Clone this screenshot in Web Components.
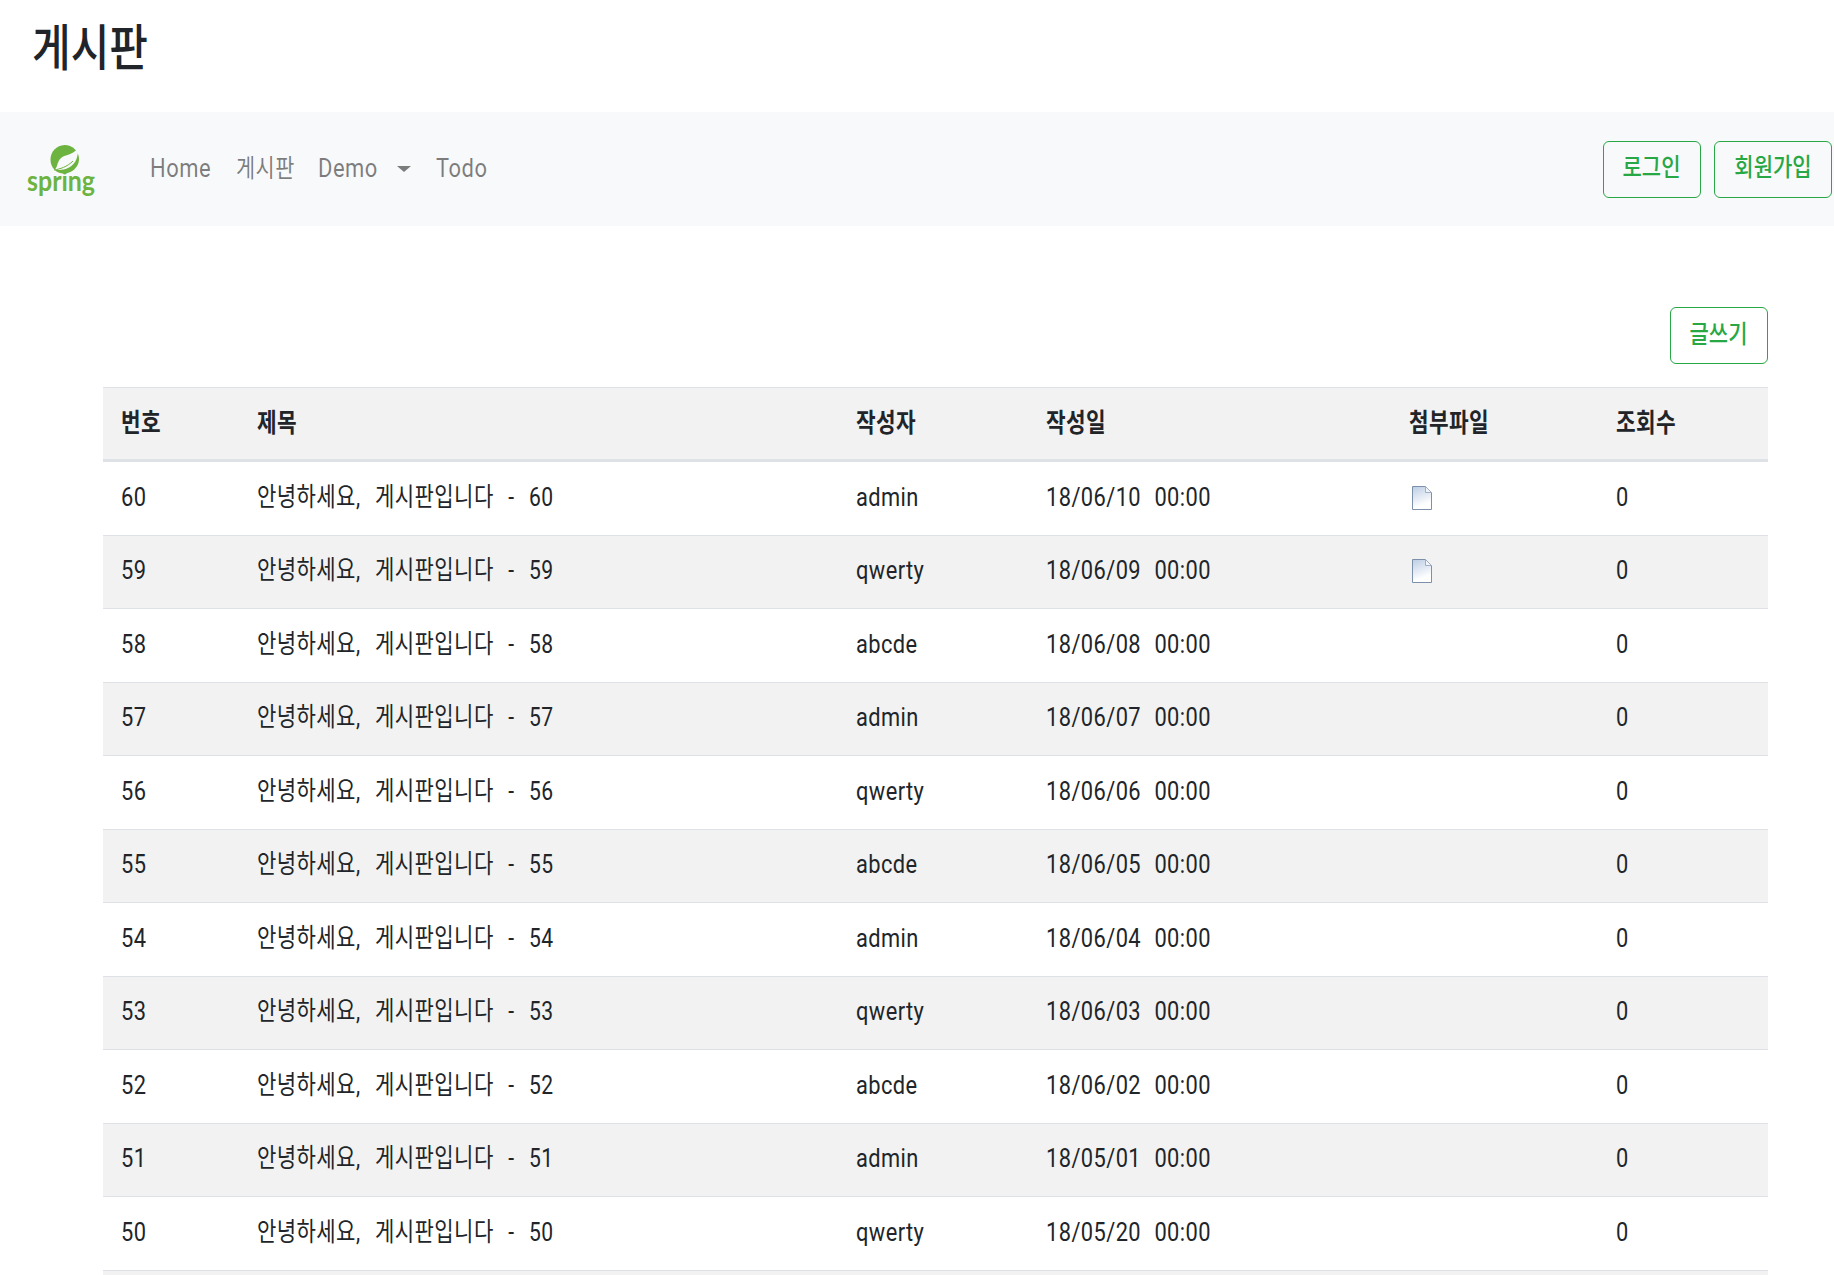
<!DOCTYPE html>
<html lang="ko">
<head>
<meta charset="utf-8">
<title>게시판</title>
<style>
  html, body { margin: 0; height: 1275px; overflow: hidden; background: #fff; }
  body { font-family: Roboto, "Noto Sans CJK KR", sans-serif; color: #212529; }
</style>
</head>
<body>
<board-page></board-page>
<script>
const FONT = 'Roboto, "Noto Sans CJK KR", sans-serif';

// text drawn narrower than the font, the reference has tall thin letters
class SqueezeText extends HTMLElement {
  connectedCallback() {
    this.attachShadow({ mode: 'open' });
    this.shadowRoot.innerHTML = `
      <style>
        :host {
          display: inline-block;
          transform: scaleX(var(--squeeze, 0.84));
          transform-origin: var(--squeeze-origin, left) center;
        }
        span { white-space: pre; }
      </style>
      <span><slot></slot></span>
    `;
  }
}

class OutlineButton extends HTMLElement {
  connectedCallback() {
    this.attachShadow({ mode: 'open' });
    this.shadowRoot.innerHTML = `
      <style>
        :host {
          display: inline-flex;
          box-sizing: border-box;
          height: 57px;
          width: var(--btn-width, 98px);
          align-items: center;
          justify-content: center;
          border: 1px solid #28a745;
          border-radius: 6px;
          color: #28a745;
          font-size: 25px;
          font-weight: 500;
          line-height: 1;
          padding-bottom: 3px;
          --squeeze-origin: center;
        }
      </style>
      <squeeze-text><slot></slot></squeeze-text>
    `;
  }
}

class SpringLogo extends HTMLElement {
  connectedCallback() {
    this.attachShadow({ mode: 'open' });
    this.shadowRoot.innerHTML = `
      <style>
        :host {
          display: flex;
          flex-direction: column;
          width: 70px;
          padding-bottom: 3px;
          color: #6db33f;
          font-family: Lato, sans-serif;
          font-weight: 700;
          font-size: 29px;
          line-height: 24px;
          --squeeze: 0.86;
        }
        svg { display: block; }
        .word { height: 24px; width: 70px; margin-top: -6px; }
      </style>
      <svg width="70" height="30" viewBox="0 0 70 30">
        <path d="M37.5 1 C45 1 52 7 52 15 C52 23 45 29.5 37 29.5 C29 29.5 23.5 23.5 23.5 15.5 C23.5 7.5 29.5 1.5 37.5 1 Z" fill="#6db33f"/>
        <path d="M50 3 C50.5 11 48 19 41 22.5 C35 25.5 30 25 27 24.5 C31 20.5 28 13.5 38 10.5 C43 9 47 7 50 3 Z" fill="#f8f9fa" transform="translate(1 1)"/>
        <path d="M27 26 C33 25 40 23 46 17" fill="none" stroke="#6db33f" stroke-width="1"/>
      </svg>
      <div class="word"><squeeze-text>spring</squeeze-text></div>
    `;
  }
}

class NavLink extends HTMLElement {
  connectedCallback() {
    this.attachShadow({ mode: 'open' });
    this.shadowRoot.innerHTML = `
      <style>
        :host {
          display: flex;
          align-items: center;
          width: var(--link-width);
          color: rgba(0, 0, 0, 0.5);
          font-size: 25.5px;
          line-height: 1;
          letter-spacing: 0.6px;
          --squeeze: 0.86;
        }
        .caret {
          margin-left: var(--caret-gap, 0);
          width: 0;
          height: 0;
          border-top: 6px solid rgba(0, 0, 0, 0.5);
          border-left: 7.5px solid transparent;
          border-right: 7.5px solid transparent;
        }
      </style>
      <squeeze-text><slot></slot></squeeze-text>
      ${this.hasAttribute('caret') ? '<span class="caret"></span>' : ''}
    `;
  }
}

class TopNav extends HTMLElement {
  connectedCallback() {
    this.attachShadow({ mode: 'open' });
    this.shadowRoot.innerHTML = `
      <style>
        :host {
          display: flex;
          align-items: center;
          height: 114px;
          padding: 0 2px 0 27px;
          background: #f8f9fa;
        }
        .links { display: flex; margin-left: 53px; flex: 1; }
        .actions { display: flex; gap: 13px; }
      </style>
      <spring-logo></spring-logo>
      <div class="links">
        <nav-link style="--link-width:86px">Home</nav-link>
        <nav-link style="--link-width:82px;--squeeze:0.815">게시판</nav-link>
        <nav-link style="--link-width:118px;--caret-gap:9px" caret>Demo</nav-link>
        <nav-link style="--link-width:60px">Todo</nav-link>
      </div>
      <div class="actions">
        <outline-button>로그인</outline-button>
        <outline-button style="--btn-width:118px">회원가입</outline-button>
      </div>
    `;
  }
}

class FileIcon extends HTMLElement {
  connectedCallback() {
    this.attachShadow({ mode: 'open' });
    this.shadowRoot.innerHTML = `
      <style>:host { display: block; width: 20px; height: 24px; } svg { display: block; }</style>
      <svg width="20" height="24" viewBox="0 0 20 24">
        <defs>
          <linearGradient id="page" x1="0" y1="0" x2="0.3" y2="1">
            <stop offset="0" stop-color="#bccde4"/>
            <stop offset="0.9" stop-color="#ffffff"/>
          </linearGradient>
        </defs>
        <path d="M0.5 0.5 H13.5 L19.5 6.5 V23.5 H0.5 Z" fill="url(#page)" stroke="#7d90aa"/>
        <path d="M13.5 0.5 V6.5 H19.5 Z" fill="#f2f4f8" stroke="#9fb0c6"/>
      </svg>
    `;
  }
}

class BoardRow extends HTMLElement {
  connectedCallback() {
    this.attachShadow({ mode: 'open' });
    const head = this.hasAttribute('head');
    this.shadowRoot.innerHTML = `
      <style>
        :host {
          display: grid;
          grid-template-columns: 136px 599px 190px 363px 207px 170px;
          align-items: center;
          box-sizing: border-box;
          height: var(--row-height, 73.5px);
          padding-bottom: ${head ? 1 : 3}px;
          border-top: 1px solid #dee2e6;
          background: ${this.hasAttribute('striped') || head ? '#f2f2f2' : '#fff'};
          font-size: 26px;
          line-height: 1;
          font-weight: ${head ? 700 : 400};
          color: #212529;
          letter-spacing: 0.5px;
          word-spacing: 11px;
          --squeeze: ${head ? 0.82 : 0.84};
          ${head ? 'border-bottom: 2px solid #dee2e6;' : ''}
        }
        ::slotted(*) { margin-left: 18px; }
        ::slotted(file-icon) { margin-left: 21px; margin-top: 2px; }
      </style>
      <slot></slot>
    `;
  }
}

class BoardTable extends HTMLElement {
  connectedCallback() {
    const authors = ['admin', 'qwerty', 'abcde'];
    const dates = ['18/06/10', '18/06/09', '18/06/08', '18/06/07', '18/06/06', '18/06/05',
      '18/06/04', '18/06/03', '18/06/02', '18/05/01', '18/05/20'];
    const rows = dates.map((date, i) => {
      const no = 60 - i;
      const icon = i < 2 ? '<file-icon></file-icon>' : '<span></span>';
      return `<board-row ${i % 2 ? 'striped' : ''}>
        <squeeze-text>${no}</squeeze-text>
        <squeeze-text style="--squeeze:0.81">안녕하세요, 게시판입니다 - ${no}</squeeze-text>
        <squeeze-text>${authors[i % 3]}</squeeze-text>
        <squeeze-text style="word-spacing:9px">${date} 00:00</squeeze-text>
        ${icon}
        <squeeze-text>0</squeeze-text>
      </board-row>`;
    }).join('');
    this.attachShadow({ mode: 'open' });
    this.shadowRoot.innerHTML = `
      <style>:host { display: block; }</style>
      <board-row head style="--row-height:74px">
        <squeeze-text>번호</squeeze-text>
        <squeeze-text>제목</squeeze-text>
        <squeeze-text>작성자</squeeze-text>
        <squeeze-text>작성일</squeeze-text>
        <squeeze-text>첨부파일</squeeze-text>
        <squeeze-text>조회수</squeeze-text>
      </board-row>
      ${rows}
      <board-row striped style="--row-height:5.5px;padding:0"></board-row>
    `;
  }
}

class BoardPage extends HTMLElement {
  connectedCallback() {
    this.attachShadow({ mode: 'open' });
    this.shadowRoot.innerHTML = `
      <style>
        :host { display: block; font-family: ${FONT.replace(/"/g, "'")}; }
        h1 { margin: 0; height: 112px; box-sizing: border-box; padding: 24px 0 0 32px;
             font-size: 50px; line-height: 1; font-weight: 500; color: #212529; }
        main { padding: 81px 66px 0 103px; }
        .tools { display: flex; justify-content: flex-end; margin-bottom: 23px; }
      </style>
      <h1><squeeze-text>게시판</squeeze-text></h1>
      <top-nav></top-nav>
      <main>
        <div class="tools"><outline-button>글쓰기</outline-button></div>
        <board-table></board-table>
      </main>
    `;
  }
}

customElements.define('squeeze-text', SqueezeText);
customElements.define('outline-button', OutlineButton);
customElements.define('spring-logo', SpringLogo);
customElements.define('nav-link', NavLink);
customElements.define('top-nav', TopNav);
customElements.define('file-icon', FileIcon);
customElements.define('board-row', BoardRow);
customElements.define('board-table', BoardTable);
customElements.define('board-page', BoardPage);
</script>
</body>
</html>
